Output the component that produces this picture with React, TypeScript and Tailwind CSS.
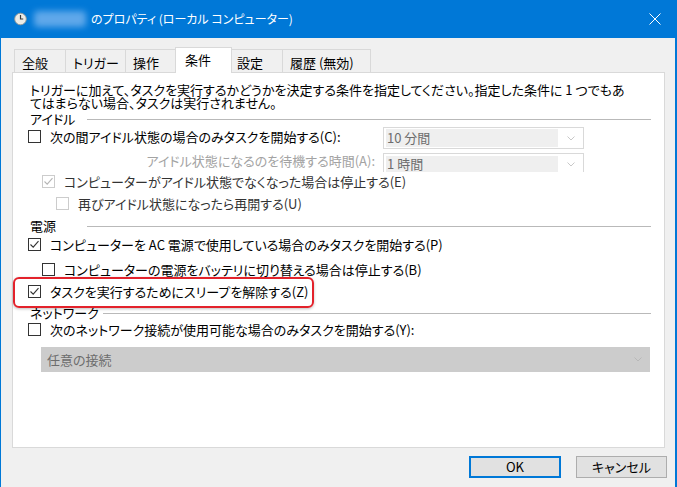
import React from "react";

function Box({ checked, disabled }: { checked?: boolean; disabled?: boolean }) {
  return (
    <div
      className={
        "w-[13px] h-[13px] shrink-0 border bg-white flex items-center justify-center " +
        (disabled ? "border-[#cccccc]" : "border-[#333333]")
      }
    >
      {checked && (
        <svg width="11" height="11" viewBox="0 0 11 11">
          <path
            d="M1.5 5.5 L4.2 8.2 L9.5 2.2"
            fill="none"
            stroke={disabled ? "#b5b5b5" : "#333333"}
            strokeWidth="1.1"
          />
        </svg>
      )}
    </div>
  );
}

function Check({
  label,
  checked,
  disabled,
  indent,
  dim,
}: {
  label: string;
  checked?: boolean;
  disabled?: boolean;
  indent: string;
  dim?: boolean;
}) {
  return (
    <div className={"h-[19px] flex items-center shrink-0 " + indent}>
      <Box checked={checked} disabled={disabled} />
      <span className={"ml-[9px] whitespace-nowrap leading-[14px] " + (dim ? "text-[#333333]" : "text-black")}>
        {label}
      </span>
    </div>
  );
}

function Header({ label, mt }: { label: string; mt: string }) {
  return (
    <div className={"h-[14px] flex items-center pl-[17px] " + mt}>
      <span className="min-w-[57px] pr-[4px] whitespace-nowrap leading-[14px]">{label}</span>
      <div className="flex-1 h-px bg-[#b9b9b9] mr-[13px]" />
    </div>
  );
}

function Chevron({ color }: { color: string }) {
  return (
    <svg width="8" height="5" viewBox="0 0 8 5">
      <path d="M0.5 0.5 L4 4 L7.5 0.5" fill="none" stroke={color} strokeWidth="1" />
    </svg>
  );
}

export default function App() {
  return (
    <div className="w-[677px] h-[487px] bg-[#f0f0f0] border-l border-r-2 border-[#0078d7] flex flex-col text-[13px] text-black [font-family:'Noto_Sans_CJK_JP','Noto_Sans',sans-serif] [font-feature-settings:'palt'] overflow-hidden">
      {/* title bar */}
      <div className="h-[38px] shrink-0 bg-[#0078d7] flex items-center relative">
        <div className="ml-[13px] w-[13px] h-[14px] flex items-center justify-center">
          <svg width="13" height="14" viewBox="0 0 13 14">
            <circle cx="6.5" cy="7" r="5.8" fill="#ecebe6" stroke="#9a9a94" strokeWidth="0.9" />
            <path d="M6.5 3 L6.5 7 L9.2 7" fill="none" stroke="#3a3a3a" strokeWidth="1.2" />
          </svg>
        </div>
        <div className="ml-[7px] w-[52px] h-[16px] rounded-[4px] bg-[#5fa8ea] blur-[3px]" />
        <span className="ml-[5px] text-white text-[12px] whitespace-nowrap leading-[16px]">
          のプロパティ (ローカル コンピューター)
        </span>
        <div className="flex-1" />
        <svg className="mr-[14px]" width="12" height="12" viewBox="0 0 12 12">
          <path d="M0.5 0.5 L11.5 11.5 M11.5 0.5 L0.5 11.5" stroke="#ffffff" strokeWidth="1" />
        </svg>
      </div>

      {/* tabs */}
      <div className="mt-[9px] ml-[13px] h-[25px] flex items-end shrink-0">
        {[
          ["全般", "w-[51px]"],
          ["トリガー", "w-[60px]"],
          ["操作", "w-[50px]"],
        ].map(([t, w]) => (
          <div
            key={t}
            className={"h-[23px] border-l border-t border-[#d9d9d9] bg-[#f0f0f0] pl-[7px] pt-[3px] flex items-center whitespace-nowrap " + w}
          >
            {t}
          </div>
        ))}
        <div className="w-[57px] h-[26px] -mb-px relative z-10 border-l border-t border-r border-[#d9d9d9] bg-white pl-[9px] pb-[2px] flex items-center whitespace-nowrap">
          条件
        </div>
        <div className="w-[50px] h-[23px] border-t border-[#d9d9d9] bg-[#f0f0f0] pl-[5px] pt-[3px] flex items-center whitespace-nowrap">
          設定
        </div>
        <div className="w-[89px] h-[23px] border-l border-t border-r border-[#d9d9d9] bg-[#f0f0f0] pl-[7px] pt-[3px] flex items-center whitespace-nowrap">
          履歴 (無効)
        </div>
      </div>

      {/* panel */}
      <div className="ml-[11px] w-[653px] h-[376px] shrink-0 border border-[#d9d9d9] bg-white flex flex-col">
        <div className="mt-[10px] pl-[17px] leading-[13px] whitespace-nowrap">
          トリガーに加えて、タスクを実行するかどうかを決定する条件を指定してください。指定した条件に 1 つでもあ
          <br />
          てはまらない場合、タスクは実行されません。
        </div>

        <Header label="アイドル" mt="mt-[3px]" />

        <div className="mt-[1px] h-[22px] flex items-start">
          <div className="w-[370px] shrink-0 pt-[0px]">
            <Check label="次の間アイドル状態の場合のみタスクを開始する(C):" indent="ml-[15px]" />
          </div>
          <div className="w-[201px] h-[22px] border border-[#d9d9d9] bg-white flex items-center pl-[2px] pr-[8px]">
            <div className="w-[172px] h-[18px] bg-[#efefef] text-[#6d6d6d] flex items-center pl-[1px] leading-[14px]">
              10 分間
            </div>
            <div className="flex-1" />
            <Chevron color="#c8c8c8" />
          </div>
        </div>

        <div className="mt-[3px] h-[20px] flex items-start">
          <div className="w-[362px] shrink-0 text-right text-[#a3a3a3] leading-[14px] pt-[2px] whitespace-nowrap">
            アイドル状態になるのを待機する時間(A):
          </div>
          <div className="ml-[8px] mt-[1px] w-[201px] h-[19px] border border-b-0 border-[#d9d9d9] bg-white flex items-start pt-[2px] pl-[2px] pr-[8px] overflow-hidden">
            <div className="w-[172px] h-[17px] bg-[#efefef] text-[#6d6d6d] flex items-start pl-[1px] leading-[15px] overflow-hidden">
              1 時間
            </div>
            <div className="flex-1" />
            <div className="pt-[6px]">
              <Chevron color="#c8c8c8" />
            </div>
          </div>
        </div>

        <Check
          label="コンピューターがアイドル状態でなくなった場合は停止する(E)"
          checked
          disabled
          dim
          indent="ml-[29px]"
        />
        <div className="mt-[3px]">
          <Check label="再びアイドル状態になったら再開する(U)" disabled dim indent="ml-[43px]" />
        </div>

        <Header label="電源" mt="mt-[6px]" />

        <div className="mt-[2px]">
          <Check label="コンピューターを AC 電源で使用している場合のみタスクを開始する(P)" checked indent="ml-[15px]" />
        </div>
        <div className="mt-[6px]">
          <Check label="コンピューターの電源をバッテリに切り替える場合は停止する(B)" indent="ml-[29px]" />
        </div>

        <div className="mt-[-2px] w-[301px] h-[31px] border-2 border-[#e3222b] rounded-[6px] shadow-[0_1px_3px_rgba(0,0,0,0.25)] flex items-start pt-[3px] pl-[13px] relative z-10">
          <div className="-ml-[15px]">
            <Check label="タスクを実行するためにスリープを解除する(Z)" checked indent="ml-[15px]" />
          </div>
        </div>

        <div className="-mt-[2px]">
          <Header label="ネットワーク" mt="mt-0" />
        </div>

        <Check label="次のネットワーク接続が使用可能な場合のみタスクを開始する(Y):" indent="ml-[15px]" />

        <div className="mt-[8px] ml-[28px] w-[609px] h-[25px] bg-[#cccccc] text-[#6d6d6d] flex items-center pl-[6px] pr-[8px]">
          <span className="leading-[14px]">任意の接続</span>
          <div className="flex-1" />
          <Chevron color="#b8b8b8" />
        </div>
      </div>

      {/* buttons */}
      <div className="mt-[8px] flex justify-end pr-[8px] gap-[15px]">
        <div className="w-[92px] h-[22px] border-2 border-[#0078d7] bg-[#e1e1e1] flex items-center justify-center leading-[14px]">
          OK
        </div>
        <div className="w-[91px] h-[22px] border border-[#adadad] bg-[#e1e1e1] flex items-center justify-center leading-[14px]">
          キャンセル
        </div>
      </div>
    </div>
  );
}
